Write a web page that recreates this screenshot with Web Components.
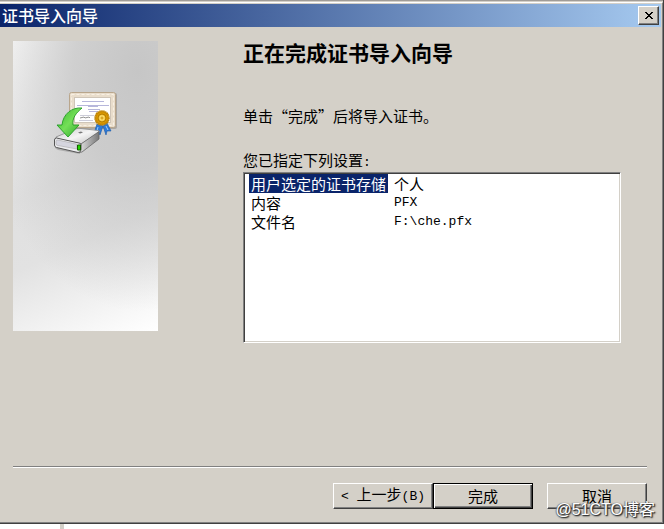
<!DOCTYPE html>
<html lang="zh-CN">
<head>
<meta charset="utf-8">
<title>证书导入向导</title>
<style>
html, body {
    height: 100%;
}
body {
    margin: 0;
    background: linear-gradient(#d4d0c8, #d4d0c8) 60px 100% / 4px 5px no-repeat #fff;
    color: #000;
    font: 15px/19px 'Noto Sans CJK SC', 'Liberation Sans', sans-serif;
    overflow: hidden;
}
.code {
    font: 13px/19px 'Liberation Mono', monospace;
}
</style>
</head>
<body>
<wizard-window caption="证书导入向导">
    <wizard-banner slot="banner"></wizard-banner>
    <wizard-page heading="正在完成证书导入向导">
        <span slot="intro">单击“完成”后将导入证书。</span>
        <span slot="label">您已指定下列设置<span class="code">:</span></span>
        <settings-list></settings-list>
    </wizard-page>
    <wizard-button slot="back"><span class="code">&lt; </span>上一步<span class="code">(B)</span></wizard-button>
    <wizard-button slot="back" default>完成</wizard-button>
    <wizard-button slot="cancel">取消</wizard-button>
</wizard-window>
<water-mark>@51CTO博客</water-mark>

<script>
class WizardWindow extends HTMLElement {
    constructor() {
        super();
        this.attachShadow({ mode: 'open' });
        this.shadowRoot.innerHTML = `
<style>
:host {
    display: flex;
    flex-direction: column;
    box-sizing: border-box;
    height: calc(100% - 5px);
    padding-top: 1px;
    border-right: 1px solid #404040;
    border-bottom: 1px solid #404040;
    background: linear-gradient(#a09c98, #a09c98) 0 0 / 100% 1px no-repeat #d4d0c8;
}
.frame {
    flex: 1;
    display: flex;
    flex-direction: column;
    margin-top: 1px;
    padding-top: 1px;
    border-top: 1px solid #fff;
    border-right: 1px solid #808080;
    border-bottom: 1px solid #808080;
}
header {
    display: flex;
    align-items: center;
    justify-content: space-between;
    height: 23px;
    margin-right: 1px;
    padding: 0 2px;
    background: linear-gradient(90deg, #0a246a, #a6caf0);
    color: #fff;
    font-size: 16px;
    font-weight: 500;
}
header button {
    display: grid;
    place-items: center;
    width: 21px;
    height: 19px;
    padding: 0;
    border: 1px solid;
    border-color: #fff #404040 #404040 #fff;
    background: #d4d0c8;
    box-shadow: inset -1px -1px #808080;
}
main {
    flex: 1;
    display: flex;
    gap: 85px;
    padding: 14px 41px 0 13px;
}
footer {
    display: flex;
    justify-content: flex-end;
    margin: 0 15px 0 13px;
    padding: 16px 0 13px;
    border-top: 1px solid #808080;
    box-shadow: inset 0 1px #fff;
}
.gap {
    width: 14px;
}
</style>
<div class="frame">
    <header>
        <span></span>
        <button type="button" aria-label="关闭">
            <svg width="10" height="9" viewBox="0 0 10 9"><path d="M1 1h2v1h1v1h2V2h1V1h2v1H8v1H7v1H6v1h1v1h1v1h1v1H7V7H6V6H4v1H3v1H1V7h1V6h1V5h1V4H3V3H2V2H1z" shape-rendering="crispEdges"/></svg>
        </button>
    </header>
    <main><slot name="banner"></slot><slot></slot></main>
    <footer><slot name="back"></slot><div class="gap"></div><slot name="cancel"></slot></footer>
</div>`;
        this.shadowRoot.querySelector('header span').textContent = this.getAttribute('caption');
    }
}

class WizardBanner extends HTMLElement {
    constructor() {
        super();
        this.attachShadow({ mode: 'open' });
        this.shadowRoot.innerHTML = `
<style>
:host {
    display: flex;
    flex: none;
    justify-content: center;
    box-sizing: border-box;
    width: 145px;
    height: 290px;
    padding-top: 46px;
    background: radial-gradient(ellipse 160px 240px at 125px 30px, #c6c6c6, rgba(198, 198, 198, .8) 40%, rgba(198, 198, 198, 0)), linear-gradient(155deg, #fff, #e0e0e0 45%, #e2e2e2 65%, #fff);
}
</style>
<svg width="71" height="70" viewBox="0 0 71 70" aria-hidden="true">
    <defs>
        <linearGradient id="arrow" x1="0" y1="0" x2="1" y2="1">
            <stop offset="0" stop-color="#37b62e"/><stop offset=".5" stop-color="#74df58"/><stop offset="1" stop-color="#2aa52a"/>
        </linearGradient>
        <linearGradient id="top" x1="0" y1="0" x2="1" y2="1">
            <stop offset="0" stop-color="#c8c8c8"/><stop offset=".5" stop-color="#f4f4f4"/><stop offset="1" stop-color="#bcbcbc"/>
        </linearGradient>
        <linearGradient id="side" x1="0" y1="0" x2="1" y2="0">
            <stop offset="0" stop-color="#e4e4e4"/><stop offset="1" stop-color="#777"/>
        </linearGradient>
        <radialGradient id="seal">
            <stop offset="0" stop-color="#c88a00"/><stop offset=".3" stop-color="#ffe070"/><stop offset=".6" stop-color="#e0a000"/><stop offset="1" stop-color="#c48200"/>
        </radialGradient>
    </defs>
    <rect x="20" y="6" width="47" height="36" rx="2" fill="#8a8278" opacity=".5"/>
    <rect x="19.5" y="5.5" width="46" height="35" rx="2" fill="#e9ddcb" stroke="#b9a68c"/>
    <rect x="21.5" y="7.5" width="42" height="31" fill="none" stroke="#f8f0e4" stroke-dasharray="3 2"/>
    <rect x="24.5" y="10.5" width="36" height="25" fill="#fff" stroke="#cfc5b8"/>
    <path d="M32 14.5h22M27 18.5h32M38 19.5h10M38 22.5h12M39 24.5h9" stroke="#a3a3d2" stroke-width=".8"/>
    <path d="M30 28.5h14M29 33.5h14" stroke="#b8b8c8" stroke-width=".7"/>
    <path d="M30 31l4-1 1 1 4-1 1 1" fill="none" stroke="#666" stroke-width=".7"/>
    <path d="M47 37l-3 9 4-1 2 3 3-9zM53 39l3 9 1-4h4l-4-8z" fill="#2d79d5" stroke="#1757a8" stroke-width=".6"/>
    <path d="M48 40l-1 4M56 39l2 4" stroke="#9acbff"/>
    <circle cx="52" cy="31" r="7" fill="url(#seal)" stroke="#bd8508" stroke-width="1.5" stroke-dasharray="1.5 .5"/>
    <circle cx="52" cy="31" r="4" fill="none" stroke="#a87100" stroke-width=".8"/>
    <path d="M6 52l23 5v8l-22-4q-3-1-3-3v-4z" transform="translate(1 2)" fill="#555" opacity=".3"/>
    <path d="M6 50l19-8q3-1 6-.5l17 2q2 0 1 2L31 57 7 52.5z" fill="url(#top)" stroke="#888" stroke-width=".8"/>
    <path d="M31 57l18-12.5V52L32 65l-3 .5z" fill="url(#side)" stroke="#666" stroke-width=".8"/>
    <path d="M6.500 51q-2 0-2 2v5q0 2 2 2.500L28 65.500q3 0 3-3V58q0-2-2-2z" fill="#ededf0" stroke="#555"/>
    <path d="M6 54.500q0-2 2-1.500l18 4q1 0 1 1v4L8 58.500q-2 0-2-2z" fill="#d5d5df" stroke="#aaa" stroke-width=".6"/>
    <path d="M27.500 58h3v5h-3z" fill="#24d600" stroke="#145d00"/>
    <path d="M28 45.500l3-1 2 1-3 1z" fill="#777"/>
    <path d="M32 21C22 20 13 27 12 38H7l11 12 11-12h-6c-1-7 3-12 9-17z" fill="url(#arrow)" stroke="#229b25" stroke-width=".9"/>
</svg>`;
    }
}

class WizardPage extends HTMLElement {
    constructor() {
        super();
        this.attachShadow({ mode: 'open' });
        this.shadowRoot.innerHTML = `
<style>
:host {
    display: block;
    flex: 1;
    min-width: 0;
}
h1 {
    margin: 0;
    font-size: 21px;
    font-weight: 700;
    line-height: 22px;
}
p {
    margin: 0;
}
.intro {
    padding: 43px 0 25px;
}
</style>
<h1></h1>
<p class="intro"><slot name="intro"></slot></p>
<p><slot name="label"></slot></p>
<slot></slot>`;
        this.shadowRoot.querySelector('h1').textContent = this.getAttribute('heading');
    }
}

class SettingsList extends HTMLElement {
    constructor() {
        super();
        this.attachShadow({ mode: 'open' });
        this.shadowRoot.innerHTML = `
<style>
:host {
    display: block;
    box-sizing: border-box;
    height: 171px;
    padding: 1px 5px;
    border: 1px solid;
    border-color: #808080 #fff #fff #808080;
    background: #fff;
    box-shadow: inset 1px 1px #404040, inset -1px -1px #d4d0c8;
}
table {
    border-collapse: collapse;
}
th, td {
    height: 19px;
    padding: 0 2px;
    font-weight: 400;
    text-align: left;
    line-height: 19px;
}
td {
    padding-left: 6px;
}
.selected {
    background: #0a246a;
    color: #fff;
}
.code {
    font: 13px/19px 'Liberation Mono', monospace;
}
</style>
<table>
    <tr><th scope="row" class="selected">用户选定的证书存储</th><td>个人</td></tr>
    <tr><th scope="row">内容</th><td class="code">PFX</td></tr>
    <tr><th scope="row">文件名</th><td class="code">F:\\che.pfx</td></tr>
</table>`;
    }
}

class WizardButton extends HTMLElement {
    constructor() {
        super();
        this.attachShadow({ mode: 'open' });
        this.shadowRoot.innerHTML = `
<style>
:host {
    display: block;
}
button {
    display: block;
    width: 100px;
    height: 26px;
    padding: 0 0 2px;
    border: 1px solid;
    border-color: #fff #404040 #404040 #fff;
    background: #d4d0c8;
    box-shadow: inset -1px -1px #808080;
    color: inherit;
    font: inherit;
    white-space: nowrap;
}
:host([default]) button {
    border-color: #000;
    box-shadow: inset 1px 1px #fff, inset -1px -1px #404040, inset -2px -2px #808080;
}
</style>
<button type="button"><slot></slot></button>`;
    }
}

class WaterMark extends HTMLElement {
    constructor() {
        super();
        this.attachShadow({ mode: 'open' });
        this.shadowRoot.innerHTML = `
<style>
:host {
    position: absolute;
    right: 9px;
    bottom: 8px;
    color: #fff;
    font: 16px/22px 'Liberation Sans', 'Noto Sans CJK SC', sans-serif;
    text-shadow: 1px 1px 1px #333, 1px 1px 2px #333, -1px 0 1px #777;
    pointer-events: none;
}
</style>
<slot></slot>`;
    }
}

customElements.define('wizard-window', WizardWindow);
customElements.define('wizard-banner', WizardBanner);
customElements.define('wizard-page', WizardPage);
customElements.define('settings-list', SettingsList);
customElements.define('wizard-button', WizardButton);
customElements.define('water-mark', WaterMark);
</script>
</body>
</html>
